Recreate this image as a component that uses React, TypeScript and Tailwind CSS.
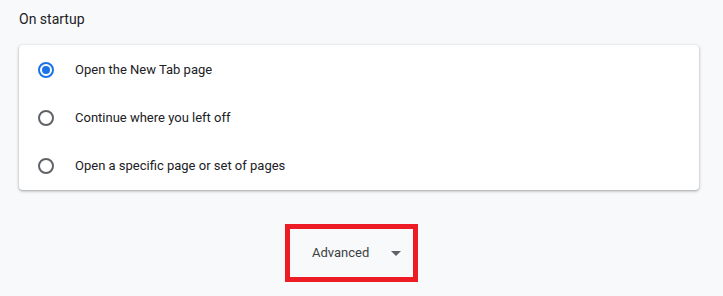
import { useState } from 'react';

const options = [
    'Open the New Tab page',
    'Continue where you left off',
    'Open a specific page or set of pages',
];

function Radio({ checked }: { checked: boolean }) {
    return (
        <span
            className={`flex h-4 w-4 shrink-0 items-center justify-center rounded-full border-2 ${checked ? 'border-[#1a73e8]' : 'border-[#5f6368]'}`}
        >
            {checked && <span className="h-2 w-2 rounded-full bg-[#1a73e8]" />}
        </span>
    );
}

export default function App() {
    const [selected, setSelected] = useState(0);

    return (
        <div className="h-[296px] w-[723px] overflow-hidden bg-[#f8f9fa] font-['Roboto',sans-serif] text-[#202124]">
            <div className="px-[19px] pt-[9px] text-[14px] leading-5">On startup</div>

            <div className="ml-[19px] mt-[16px] w-[680px] rounded bg-white pt-px shadow-[0_1px_2px_0_rgba(60,64,67,0.3),0_1px_3px_1px_rgba(60,64,67,0.15)]">
                {options.map((label, i) => (
                    <div
                        key={label}
                        className="flex h-12 cursor-pointer items-center gap-[21px] px-[19px] text-[13px]"
                        onClick={() => setSelected(i)}
                    >
                        <Radio checked={selected === i} />
                        <span>{label}</span>
                    </div>
                ))}
            </div>

            <div className="ml-[285px] mt-[34px] flex h-[58px] w-[133px] items-center border-[5px] border-[#ed1c24] pl-[22px] text-[13px] text-[#3c4043]">
                <span>Advanced</span>
                <svg width="10" height="5" viewBox="0 0 10 5" className="ml-auto mr-[12px]">
                    <path d="M0 0h10L5 5z" fill="#5f6368" />
                </svg>
            </div>
        </div>
    );
}
